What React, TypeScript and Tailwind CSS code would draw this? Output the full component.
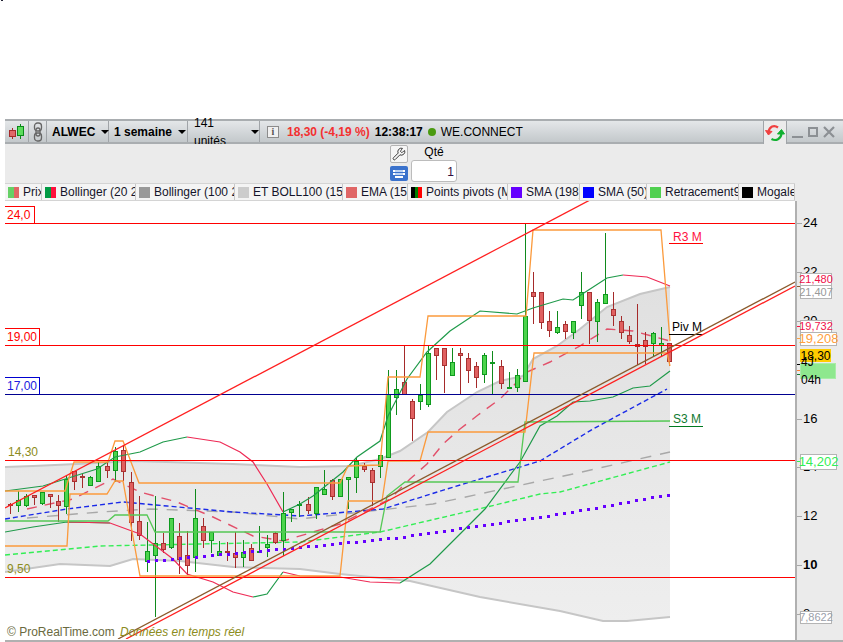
import { Wrench } from "lucide-react";

type Candle = [number, number, number, number, number, number];

// x, high, low, body top, body bottom, 1 = up
const candles: Candle[] = [
  [10, 504, 515, 505, 506, 0], [18, 492, 513, 501, 507, 1], [26, 495, 508, 497, 507, 1], [34, 496, 506, 496, 499, 0],
  [42, 493, 506, 493, 505, 1], [50, 495, 509, 495, 498, 0], [58, 496, 523, 502, 507, 0], [66, 476, 515, 480, 508, 1],
  [74, 472, 491, 472, 483, 0], [82, 475, 489, 477, 479, 0], [90, 477, 487, 478, 487, 1], [98, 463, 483, 467, 483, 1],
  [107, 463, 479, 467, 472, 0], [115, 448, 483, 452, 472, 1], [123, 447, 482, 451, 473, 0], [131, 473, 542, 483, 524, 0],
  [139, 497, 541, 522, 537, 0], [147, 523, 573, 552, 563, 1], [155, 497, 618, 544, 557, 1], [163, 534, 554, 544, 551, 0],
  [171, 519, 550, 519, 549, 1], [179, 524, 575, 537, 561, 0], [187, 532, 576, 556, 567, 0], [195, 490, 573, 519, 559, 1],
  [203, 519, 549, 527, 542, 0], [211, 533, 554, 533, 542, 1], [219, 542, 557, 552, 557, 1], [227, 543, 562, 552, 554, 0],
  [235, 533, 569, 554, 559, 0], [243, 541, 568, 553, 559, 1], [251, 545, 562, 549, 562, 0], [259, 527, 554, 552, 554, 1],
  [267, 536, 558, 545, 549, 1], [275, 533, 545, 534, 544, 0], [283, 493, 557, 514, 542, 1], [291, 510, 523, 510, 514, 1],
  [299, 502, 518, 505, 507, 1], [308, 498, 515, 505, 512, 0], [316, 488, 520, 488, 515, 1], [324, 471, 496, 490, 496, 1],
  [332, 480, 501, 481, 498, 0], [340, 480, 498, 480, 498, 1], [348, 479, 510, 478, 481, 1], [356, 458, 494, 462, 479, 1],
  [364, 464, 473, 467, 471, 0], [372, 469, 507, 471, 484, 0], [380, 457, 479, 456, 468, 1], [388, 371, 459, 395, 459, 1],
  [396, 371, 416, 390, 399, 1], [404, 347, 396, 383, 396, 0], [412, 400, 442, 402, 420, 0], [420, 385, 411, 396, 403, 1],
  [428, 347, 408, 354, 406, 1], [436, 349, 381, 349, 357, 0], [444, 349, 394, 349, 367, 0], [452, 349, 377, 363, 377, 1],
  [460, 349, 395, 354, 357, 0], [468, 354, 384, 359, 372, 0], [476, 363, 389, 367, 379, 0], [484, 354, 384, 356, 376, 1],
  [492, 352, 395, 363, 364, 1], [501, 361, 390, 367, 385, 0], [509, 373, 389, 388, 389, 1], [517, 370, 393, 376, 389, 1],
  [525, 225, 383, 317, 383, 1], [533, 273, 325, 293, 298, 0], [541, 293, 330, 293, 324, 0], [549, 312, 338, 322, 332, 0],
  [557, 312, 335, 328, 334, 1], [565, 322, 340, 325, 333, 0], [573, 322, 340, 322, 334, 1], [581, 273, 320, 293, 307, 1],
  [589, 293, 345, 293, 322, 0], [597, 300, 343, 303, 323, 1], [605, 234, 305, 295, 305, 1], [613, 293, 327, 310, 317, 0],
  [621, 317, 340, 322, 334, 0], [629, 327, 345, 336, 343, 0], [637, 305, 366, 345, 348, 0], [645, 333, 365, 341, 348, 0],
  [653, 333, 358, 334, 345, 1], [661, 328, 357, 344, 347, 1], [669, 344, 367, 344, 363, 0],
];

const upperEdge = "5,468 33,467 77,465 133,462 233,465 300,468 350,467 380,460 400,452 428,433 447,413 477,393 500,382 523,377 533,360 557,347 580,330 607,308 640,295 670,288";
const lowerEdge = "5,573 60,565 110,567 133,560 180,562 233,568 300,570 340,575 410,582 480,598 560,612 603,622 627,622 670,618";
const bandFill = `${upperEdge} ${lowerEdge.split(" ").reverse().join(" ")}`;

const dots: [number, number][] = [];
for (let x = 147; x <= 670; x += 8) {
  const y = x < 300 ? 561 - ((x - 147) / 153) * 14 : x < 400 ? 547 - ((x - 300) / 100) * 10 : x < 565 ? 537 - ((x - 400) / 165) * 24 : 513 - ((x - 565) / 105) * 19;
  dots.push([x, y]);
}

const legend = [
  { label: "Prix", w: "w-[37px]", colors: ["#66d066", "#e06666"] },
  { label: "Bollinger (20 2)", w: "w-[94px]", colors: ["#009a44", "#ff0f3c"] },
  { label: "Bollinger (100 2)", w: "w-[99px]", colors: ["#999999"] },
  { label: "ET BOLL100 (150)", w: "w-[108px]", colors: ["#cccccc"] },
  { label: "EMA (15)", w: "w-[65px]", colors: ["#e06666"] },
  { label: "Points pivots (M)", w: "w-[100px]", colors: ["#000000", "#008000", "#ff0000"] },
  { label: "SMA (198)", w: "w-[72px]", colors: ["#6600ff"] },
  { label: "SMA (50)", w: "w-[67px]", colors: ["#0000ff"] },
  { label: "Retracement90", w: "w-[92px]", colors: ["#50d050"] },
  { label: "Mogalef", w: "w-[56px]", colors: ["#000000"] },
];

const ticks = [
  { y: "top-[15px]", label: "24", bold: false },
  { y: "top-[64px]", label: "22", bold: false },
  { y: "top-[113px]", label: "20", bold: false },
  { y: "top-[211px]", label: "16", bold: false },
  { y: "top-[259px]", label: "14", bold: false },
  { y: "top-[308px]", label: "12", bold: false },
  { y: "top-[357px]", label: "10", bold: true },
  { y: "top-[406px]", label: "8", bold: false },
];

function Candles() {
  return (
    <g shapeRendering="crispEdges">
      {candles.map(([x, high, low, top, bottom, up]) => (
        <g key={x}>
          <rect x={x} y={high} width={1} height={low - high} fill={up ? "#108a1c" : "#a52a2a"} />
          <rect
            x={x - 1.5}
            y={top + 0.5}
            width={4}
            height={Math.max(bottom - top - 1, 1)}
            fill={up ? "#4cd44c" : "#e06060"}
            stroke={up ? "#0e9a1e" : "#a83232"}
          />
        </g>
      ))}
    </g>
  );
}

function ChartLines() {
  return (
    <svg viewBox="5 202 790 438" className="absolute left-0 top-0 h-[438px] w-[790px]">
      <defs>
        <linearGradient id="band" x1="0" y1="0" x2="0" y2="1">
          <stop offset="0" stopColor="#e0e0e0" />
          <stop offset="1" stopColor="#eeeeee" />
        </linearGradient>
      </defs>
      <polygon points={bandFill} fill="url(#band)" />
      <polyline points={upperEdge} fill="none" stroke="#c6c6c6" strokeWidth={2} />
      <polyline points={lowerEdge} fill="none" stroke="#c6c6c6" strokeWidth={2} />

      {/* moving averages */}
      <polyline points="27,519 100,513 150,510 233,513 300,520 433,505 540,482 573,475 670,453" fill="none" stroke="#a8a8a8" strokeWidth={1.4} strokeDasharray="11 9" />
      <polyline points="5,556 100,547 300,543 380,533 487,508 540,495 560,493 670,463" fill="none" stroke="#33ee55" strokeWidth={1.4} strokeDasharray="5 3" />
      <polyline points="5,520 67,510 123,503 167,507 233,513 300,517 383,510 447,490 540,462 593,430 667,390" fill="none" stroke="#1a2ae8" strokeWidth={1.4} strokeDasharray="5 3" />
      <polyline points="27,510 73,500 113,480 140,493 177,503 213,518 253,537 283,542 340,525 390,500 410,480 427,465 443,445 460,430 478,416 500,400 527,373 550,363 580,347 607,330 633,332 670,342" fill="none" stroke="#e2506a" strokeWidth={1.4} strokeDasharray="10 8" />

      <Candles />

      {/* bollinger 20 */}
      <polyline points="5,492 43,487 97,470 115,458 140,453 163,443 187,438" fill="none" stroke="#1f9a4a" strokeWidth={1.2} />
      <polyline points="187,438 220,443 240,453 253,463 267,485 283,513" fill="none" stroke="#ee2a55" strokeWidth={1.2} />
      <polyline points="283,513 300,505 313,497 343,473 357,458 380,442 388,417 407,380 427,353 450,332 480,312 517,315 533,309 563,300 573,301 587,292 607,279 623,276" fill="none" stroke="#1f9a4a" strokeWidth={1.2} />
      <polyline points="623,276 647,278 670,287" fill="none" stroke="#ee2a55" strokeWidth={1.2} />
      <polyline points="5,533 33,528 67,523 110,524" fill="none" stroke="#1f9a4a" strokeWidth={1.2} />
      <polyline points="67,523 110,524 140,535 173,560 187,575 213,583 233,593 253,598" fill="none" stroke="#ee2a55" strokeWidth={1.2} />
      <polyline points="253,598 267,595 283,573" fill="none" stroke="#1f9a4a" strokeWidth={1.2} />
      <polyline points="283,573 300,577 340,578 370,583 400,584" fill="none" stroke="#ee2a55" strokeWidth={1.2} />
      <polyline points="400,584 430,565 460,535 485,510 520,463 540,427 557,417 573,403 590,402 613,398 633,389 650,387 670,372" fill="none" stroke="#1f9a4a" strokeWidth={1.2} />

      {/* retracement */}
      <polyline points="5,522 108,522 115,516 147,516 155,533 380,533 387,497 405,483 518,483 525,423 670,422" fill="none" stroke="#55c855" strokeWidth={1.3} />

      {/* mogalef bands */}
      <polyline points="5,492 65,492 74,463 108,463 115,442 123,442 139,484 340,484 348,467 380,466 388,378 420,378 428,317 526,317 533,231 661,231 670,342" fill="none" stroke="#fb9a3c" strokeWidth={1.3} />
      <polyline points="5,547 67,547 70,495 107,495 115,482 123,482 140,577 340,577 348,502 382,502 388,462 420,462 428,433 525,433 534,354 667,354 670,367" fill="none" stroke="#fb9a3c" strokeWidth={1.3} />

      {dots.map(([x, y]) => (
        <rect key={x} x={x} y={y} width={3} height={3} fill="#6600ff" shapeRendering="crispEdges" />
      ))}

      {/* levels */}
      <g shapeRendering="crispEdges">
        <rect x={5} y={224} width={790} height={1} fill="#ff0000" />
        <rect x={5} y={346} width={790} height={1} fill="#ff0000" />
        <rect x={5} y={395} width={790} height={1} fill="#000090" />
        <rect x={5} y={461} width={790} height={1} fill="#ff0000" />
        <rect x={5} y={578} width={790} height={1} fill="#ff0000" />
        <rect x={669} y={244} width={34} height={1} fill="#ff0000" />
        <rect x={669} y={335} width={34} height={1} fill="#000000" />
        <rect x={669} y={427} width={34} height={1} fill="#007a20" />
      </g>

      <line x1={5} y1={509} x2={590} y2={201} stroke="#ff2020" strokeWidth={1.3} />
      <line x1={118} y1={640} x2={795} y2={283} stroke="#8b5a2b" strokeWidth={1.3} />
      <line x1={126} y1={640} x2={795} y2={287} stroke="#ff2020" strokeWidth={1.3} />
    </svg>
  );
}

function Toolbar() {
  return (
    <div className="flex h-[25px] items-stretch border-y-2 border-[#a9adb0] bg-gradient-to-b from-[#e4e7e9] to-[#c3c8cb] text-[12px] text-black">
      <div className="flex w-[24px] items-center justify-center border-r border-[#a0a4a8]">
        <svg width="20" height="18" viewBox="0 0 20 18">
          <path d="M5.5 5v11M13.5 1v15" stroke="#0a8a1a" strokeWidth="1" />
          <path d="M5.5 5v11" stroke="#a52a2a" strokeWidth="1" />
          <rect x="2.5" y="7.5" width="6" height="6" fill="#e06868" stroke="#a52a2a" />
          <rect x="10.5" y="3.5" width="6" height="9" fill="#5cdc5c" stroke="#0a8a1a" />
        </svg>
      </div>
      <div className="flex w-[18px] items-center justify-center border-r border-[#a0a4a8]">
        <svg width="12" height="20" viewBox="0 0 12 20" fill="none" stroke="#666" strokeWidth="1.3">
          <rect x="2.5" y="1" width="7" height="8" rx="3" />
          <rect x="2.5" y="11" width="7" height="8" rx="3" />
          <rect x="4" y="6" width="4" height="8" rx="2" />
        </svg>
      </div>
      <div className="flex w-[62px] items-center gap-[6px] border-r border-[#a0a4a8] pl-[5px] font-bold">
        ALWEC
        <span className="h-0 w-0 border-x-[4px] border-t-[4px] border-x-transparent border-t-black" />
      </div>
      <div className="flex w-[79px] items-center gap-[6px] border-r border-[#a0a4a8] pl-[5px] font-bold">
        1 semaine
        <span className="h-0 w-0 border-x-[4px] border-t-[4px] border-x-transparent border-t-black" />
      </div>
      <div className="flex w-[72px] items-center gap-[6px] border-r border-[#a0a4a8] pl-[6px]">
        141 unités
        <span className="h-0 w-0 border-x-[4px] border-t-[4px] border-x-transparent border-t-black" />
      </div>
      <div className="flex flex-1 items-center pl-[7px]">
        <span className="mr-[8px] flex h-[12px] w-[12px] items-center justify-center border border-[#8c8c8c] bg-[#f0f0f0] font-['Liberation_Serif',serif] text-[10px] font-bold leading-none text-[#555]">
          i
        </span>
        <span className="mr-[5px] font-bold text-[#f33030]">18,30 (-4,19 %)</span>
        <span className="mr-[5px] font-bold">12:38:17</span>
        <span className="mr-[5px] h-[8px] w-[8px] rounded-full bg-[#4a9a10]" />
        WE.CONNECT
      </div>
      <div className="-mb-[2px] flex w-[24px] items-center justify-center border-x border-[#a0a4a8] bg-[#ebebeb]">
        <svg width="20" height="20" viewBox="0 0 20 20" fill="none" strokeWidth="2.2">
          <path d="M13 4.5C9 1.5 4.5 3.5 3.5 9" stroke="#f04040" />
          <path d="M0.5 7.5 3.5 12 7 8.5Z" fill="#f04040" stroke="#f04040" strokeWidth="1" />
          <path d="M6.5 16C11 18.5 16 16 16.5 10.5" stroke="#10b030" />
          <path d="M12.5 11 16.5 6.5 19.5 11Z" fill="#10b030" stroke="#10b030" strokeWidth="1" />
        </svg>
      </div>
      <div className="flex w-[56px] items-center gap-[5px] pl-[5px]">
        <span className="mt-[10px] h-[2px] w-[11px] bg-[#8c9094]" />
        <span className="h-[10px] w-[10px] border-2 border-[#8c9094]" />
        <svg width="12" height="12" viewBox="0 0 12 12" stroke="#8c9094" strokeWidth="2.2">
          <path d="M1 1l10 10M11 1 1 11" />
        </svg>
      </div>
    </div>
  );
}

function OrderPanel() {
  return (
    <div className="flex h-[39px] gap-[3px] bg-[#ebebeb] pl-[385px] pt-[1px]">
      <div className="flex flex-col gap-[3px]">
        <div className="flex h-[18px] w-[18px] items-center justify-center rounded-[2px] border border-[#b4b4b4] bg-[#f6f6f6]">
          <Wrench size={14} strokeWidth={1.5} color="#222" />
        </div>
        <div className="flex h-[15px] w-[18px] flex-col items-center justify-center gap-[1px] rounded-[2px] bg-[#3a72cc]">
          <span className="h-[2px] w-[12px] border-x-2 border-white bg-[#bcd2f2]" />
          <span className="h-[2px] w-[12px] border-x-2 border-white bg-[#bcd2f2]" />
          <span className="h-[2px] w-[8px] bg-white" />
        </div>
      </div>
      <div className="flex flex-col items-center">
        <span className="h-[15px] text-[12px] leading-[15px] text-black">Qté</span>
        <div className="h-[22px] w-[46px] rounded-[3px] border border-[#bcbcbc] bg-white pr-[2px] text-right text-[12px] leading-[22px] text-[#301040]">
          1
        </div>
      </div>
    </div>
  );
}

function Legend() {
  return (
    <div className="flex h-[18px] bg-[#ebebeb] text-[12px] leading-[16px] text-[#14142a]">
      <div className="flex border-y border-[#d4d4d4] bg-[#f4f4f4]">
        {legend.map((item) => (
          <div key={item.label} className={`flex items-center gap-[4px] overflow-hidden whitespace-nowrap border-r border-[#c8c8c8] pl-[3px] ${item.w}`}>
            <span className="flex h-[11px] w-[11px] shrink-0">
              {item.colors.map((c) => (
                <span key={c} className="h-full flex-1" style={{ backgroundColor: c }} />
              ))}
            </span>
            {item.label}
          </div>
        ))}
      </div>
    </div>
  );
}

function PriceAxis() {
  return (
    <div className="relative h-full w-[48px] overflow-hidden border-l-2 border-[#b0b0b0] bg-[#ebebeb]">
      {ticks.map((t) => (
        <div key={t.label} className={`absolute left-0 flex items-center gap-[1px] text-black ${t.y}`}>
          <span className="h-[1px] w-[5px] bg-[#a8a8a8]" />
          <span className={`text-[13px] leading-[14px] ${t.bold ? "font-bold" : ""}`}>{t.label}</span>
        </div>
      ))}
      <span className="absolute left-0 top-[85px] h-[1px] w-[5px] bg-[#8b5a2b]" />
      <span className="absolute left-0 top-[125px] h-[1px] w-[5px] bg-[#ff1040]" />
      <span className="absolute left-0 top-[137px] h-[1px] w-[5px] bg-[#ffa040]" />
      <span className="absolute left-0 top-[163px] h-[1px] w-[5px] bg-[#000000]" />
      <span className="absolute left-0 top-[169px] h-[1px] w-[5px] bg-[#ff8030]" />
      <span className="absolute left-0 top-[173px] h-[1px] w-[5px] bg-[#107a30]" />
      <span className="absolute left-0 top-[260px] h-[1px] w-[5px] bg-[#33ee55]" />
      <div className="absolute left-[3px] top-[72px] flex h-[13px] w-[32px] items-center justify-center border border-[#b4b4b4] bg-white text-[11px] text-[#f0104a]">21,480</div>
      <div className="absolute left-[3px] top-[84px] flex h-[14px] w-[32px] items-center justify-center border border-[#b4b4b4] bg-white text-[11px] text-[#999999]">21,407</div>
      <div className="absolute left-[3px] top-[119px] flex h-[13px] w-[32px] items-center justify-center border border-[#b4b4b4] bg-white text-[11px] text-[#f0104a]">19,732</div>
      <div className="absolute left-[3px] top-[131px] flex h-[14px] w-[37px] items-center justify-center border border-[#b4b4b4] bg-white text-[13px] text-[#ffa040]">19,208</div>
      <div className="absolute left-[3px] top-[148px] flex h-[13px] w-[31px] items-center justify-center bg-[#ffcc00] text-[12px] text-black">18,30</div>
      <div className="absolute left-[3px] top-[162px] flex h-[16px] w-[36px] items-center justify-center border border-[#a8eca8] bg-[#8ee88e] text-[12px] text-black">4J 04h</div>
      <div className="absolute left-[3px] top-[253px] flex h-[16px] w-[37px] items-center justify-center border border-[#b4b4b4] bg-white text-[13px] text-[#33ee55]">14,202</div>
      <div className="absolute left-[3px] top-[410px] flex h-[13px] w-[32px] items-center justify-center border border-[#b4b4b4] bg-white text-[11px] text-[#9aa0aa]">7,8622</div>
    </div>
  );
}

export default function App() {
  return (
    <div className="flex h-[642px] w-[843px] flex-col overflow-hidden bg-white font-['Liberation_Sans',Arial,sans-serif]">
      <div className="h-[119px] shrink-0">
        <span className="block h-[1px] w-[2px] translate-x-[1px] bg-[#223]" />
      </div>
      <div className="flex min-h-0 flex-1 flex-col pl-[5px]">
        <Toolbar />
        <OrderPanel />
        <Legend />
        <div className="flex min-h-0 flex-1 border-b-2 border-[#b0b0b0]">
          <div className="relative h-full w-[790px] overflow-hidden bg-white text-[12px]">
            <ChartLines />
            <span className="absolute left-0 top-[5px] h-[18px] w-[30px] border-r border-t border-[#ff0000] pl-[2px] leading-[17px] text-[#ff0000]">24,0</span>
            <span className="absolute left-0 top-[127px] h-[18px] w-[35px] border-r border-t border-[#ff0000] pl-[2px] leading-[17px] text-[#ff0000]">19,00</span>
            <span className="absolute left-0 top-[176px] h-[18px] w-[35px] border-r border-t border-[#0000d0] pl-[2px] leading-[17px] text-[#2020e0]">17,00</span>
            <span className="absolute left-[3px] top-[244px] leading-[14px] text-[#8c8c20]">14,30</span>
            <span className="absolute left-[2px] top-[361px] leading-[14px] text-[#8c8c20]">9,50</span>
            <span className="absolute left-[668px] top-[29px] leading-[14px] text-[#ff1040]">R3 M</span>
            <span className="absolute left-[667px] top-[119px] leading-[14px] text-black">Piv M</span>
            <span className="absolute left-[668px] top-[211px] leading-[14px] text-[#107a30]">S3 M</span>
            <span className="absolute left-[2px] top-[424px] whitespace-nowrap leading-[14px] text-[#6a6a40]">
              © ProRealTime.com <span className="ml-[2px] italic text-[#8c8c20]">Données en temps réel</span>
            </span>
          </div>
          <PriceAxis />
        </div>
      </div>
    </div>
  );
}
